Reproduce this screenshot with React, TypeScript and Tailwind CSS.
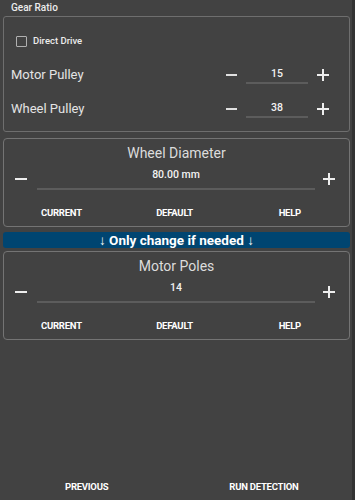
import React from "react";

const Minus = () => (
  <svg width="12" height="12" viewBox="0 0 12 12"><rect x="0" y="5" width="12" height="2" fill="#eeeeee" /></svg>
);
const Plus = () => (
  <svg width="12" height="12" viewBox="0 0 12 12"><rect x="0" y="5" width="12" height="2" fill="#eeeeee" /><rect x="5" y="0" width="2" height="12" fill="#eeeeee" /></svg>
);

function StepRow({ label, value }: { label: string; value: string }) {
  return (
    <div className="flex items-center h-[34px] pl-[7px]">
      <div className="text-[13px] text-[#e4e4e4] flex-1">{label}</div>
      <div className="w-[11px] flex justify-center"><Minus /></div>
      <div className="ml-[9px] w-[62px] flex flex-col items-center">
        <div className="text-[10.5px] text-[#f2f2f2] font-medium h-[14px] leading-[14px]">{value}</div>
        <div className="w-full h-[2px] bg-[#5c5c5c] mt-[1px]" />
      </div>
      <div className="ml-[9px] w-[12px] flex justify-center"><Plus /></div>
      <div className="w-[20px]" />
    </div>
  );
}

function Card({ title, value }: { title: string; value: string }) {
  return (
    <div className="border border-[#747474] rounded-[4px] h-[89px] flex flex-col">
      <div className="h-[26px] flex items-center justify-center text-[14px] text-[#dcdcdc] pt-[2px]">{title}</div>
      <div className="flex items-start h-[30px]">
        <div className="w-[33px] flex justify-center pt-[8px]"><Minus /></div>
        <div className="flex-1 flex flex-col items-center">
          <div className="text-[10.5px] text-[#f2f2f2] font-medium h-[20px] leading-[20px]">{value}</div>
          <div className="w-full h-[2px] bg-[#5c5c5c] mt-[3px]" />
        </div>
        <div className="w-[34px] flex justify-start pt-[8px] pl-[8px]"><Plus /></div>
      </div>
      <div className="flex items-center h-[28px] pt-[8px] text-[9.5px] font-bold text-white tracking-tight">
        <div className="w-[100px] pl-[37px]">CURRENT</div>
        <div className="flex-1 text-center pr-[4px]">DEFAULT</div>
        <div className="w-[100px] text-right pr-[48px]">HELP</div>
      </div>
    </div>
  );
}

export default function App() {
  return (
    <div className="w-[355px] h-[500px] bg-[#424242] flex" style={{ fontFamily: "Roboto, 'Liberation Sans', sans-serif" }}>
      <div className="w-[352px] h-full flex flex-col px-[3px] pr-[2px]">
        <div className="h-[16px] pl-[8px] text-[10px] font-medium text-[#ececec] leading-[16px]">Gear Ratio</div>
        <div className="border border-[#6e6e6e] rounded-[3px] h-[116px] flex flex-col">
          <div className="h-[40px] flex items-center pl-[12px] pt-[8px]">
            <div className="w-[11px] h-[11px] border-[1.5px] border-[#b0b0b0] rounded-[1px]" />
            <div className="ml-[6px] text-[9.5px] font-medium text-[#ececec]">Direct Drive</div>
          </div>
          <div className="mt-[1px]">
            <StepRow label="Motor Pulley" value="15" />
            <StepRow label="Wheel Pulley" value="38" />
          </div>
        </div>
        <div className="h-[6px]" />
        <Card title="Wheel Diameter" value="80.00 mm" />
        <div className="h-[5px]" />
        <div className="h-[16px] bg-[#004571] rounded-[3px] flex items-center justify-center text-[13.5px] font-bold text-white">↓ Only change if needed ↓</div>
        <div className="h-[3px]" />
        <Card title="Motor Poles" value="14" />
        <div className="flex-1" />
        <div className="h-[20px] flex items-start text-[9.5px] font-bold text-white tracking-tight">
          <div className="w-[62px]" />
          <div>PREVIOUS</div>
          <div className="w-[121px]" />
          <div>RUN DETECTION</div>
        </div>
      </div>
      <div className="w-[3px] h-full bg-[#333333]" />
    </div>
  );
}
